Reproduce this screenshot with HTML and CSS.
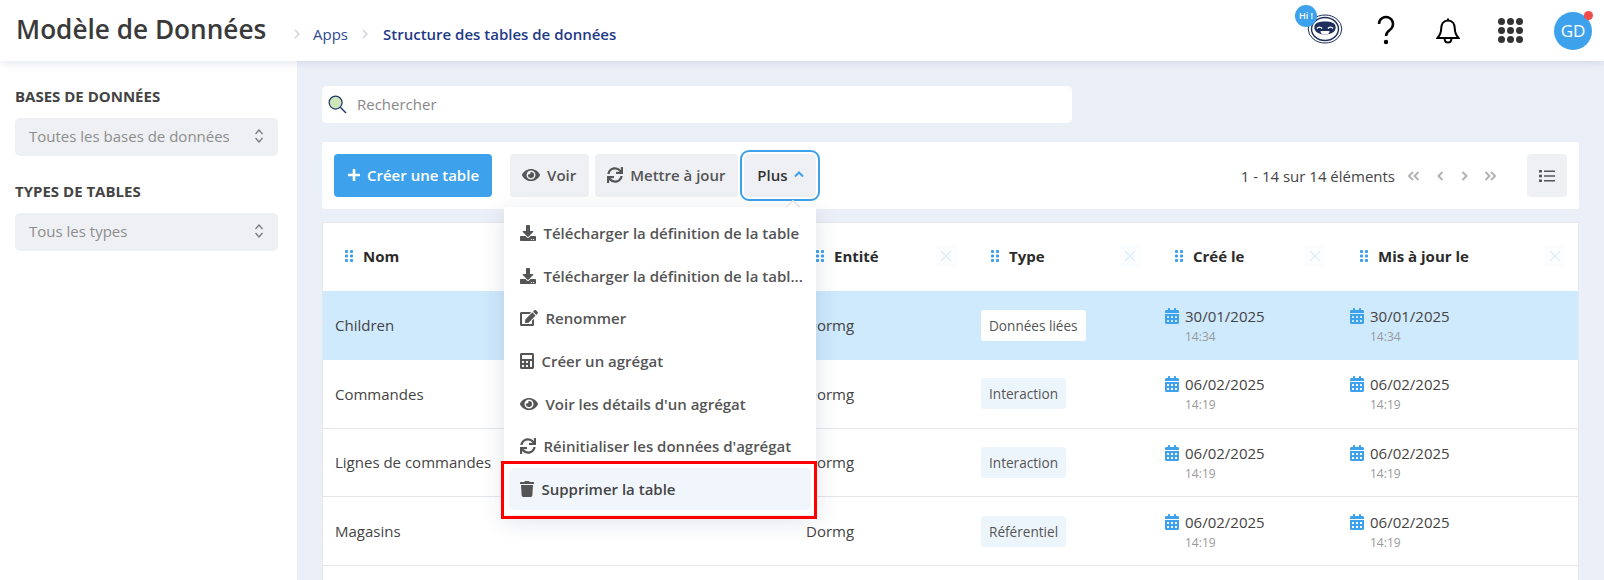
FILE: index.html
```html
<!DOCTYPE html>
<html lang="fr">
<head>
    <meta charset="UTF-8">
    <title>Modèle de Données</title>
    <link rel="stylesheet" href="styles.css">
</head>
<body>
    <svg class="sprites" xmlns="http://www.w3.org/2000/svg">
        <symbol id="i-eye" viewBox="0 0 576 512"><path d="M572.52 241.4C518.29 135.59 410.93 64 288 64S57.68 135.64 3.48 241.41a32.35 32.35 0 0 0 0 29.19C57.71 376.41 165.07 448 288 448s230.32-71.64 284.52-177.41a32.35 32.35 0 0 0 0-29.19zM288 400a144 144 0 1 1 144-144 143.93 143.93 0 0 1-144 144zm0-240a95.31 95.31 0 0 0-25.31 3.79 47.85 47.85 0 0 1-66.9 66.9A95.78 95.78 0 1 0 288 160z"/></symbol>
        <symbol id="i-sync" viewBox="0 0 512 512"><path d="M440.65 12.57l4 82.77A247.16 247.16 0 0 0 255.83 8C134.73 8 33.91 94.92 12.29 209.82A12 12 0 0 0 24.09 224h49.05a12 12 0 0 0 11.67-9.26 175.91 175.91 0 0 1 317-56.94l-101.46-4.86a12 12 0 0 0-12.57 12v47.41a12 12 0 0 0 12 12H500a12 12 0 0 0 12-12V12a12 12 0 0 0-12-12h-47.37a12 12 0 0 0-11.98 12.57zM255.83 432a175.61 175.61 0 0 1-146-77.8l101.8 4.87a12 12 0 0 0 12.57-12v-47.4a12 12 0 0 0-12-12H12a12 12 0 0 0-12 12V500a12 12 0 0 0 12 12h47.35a12 12 0 0 0 12-12.6l-4.15-82.57A247.17 247.17 0 0 0 255.83 504c121.11 0 221.93-86.92 243.55-201.82a12 12 0 0 0-11.8-14.18h-49.05a12 12 0 0 0-11.67 9.26A175.86 175.86 0 0 1 255.83 432z"/></symbol>
        <symbol id="i-download" viewBox="0 0 512 512"><path d="M216 0h80c13.3 0 24 10.7 24 24v168h87.7c17.8 0 26.7 21.5 14.1 34.1L269.7 378.3c-7.5 7.5-19.8 7.5-27.3 0L90.1 226.1c-12.6-12.6-3.7-34.1 14.1-34.1H192V24c0-13.3 10.7-24 24-24zm296 376v112c0 13.3-10.7 24-24 24H24c-13.3 0-24-10.7-24-24V376c0-13.3 10.7-24 24-24h146.7l49 49c20.1 20.1 52.5 20.1 72.6 0l49-49H488c13.3 0 24 10.7 24 24zm-124 88c0-11-9-20-20-20s-20 9-20 20 9 20 20 20 20-9 20-20zm64 0c0-11-9-20-20-20s-20 9-20 20 9 20 20 20 20-9 20-20z"/></symbol>
        <symbol id="i-edit" viewBox="0 0 576 512"><path d="M402.6 83.2l90.2 90.2c3.8 3.8 3.8 10 0 13.8L274.4 405.6l-92.8 10.3c-12.4 1.4-22.9-9.1-21.5-21.5l10.3-92.8L388.8 83.2c3.8-3.8 10-3.8 13.8 0zm162-22.9l-48.8-48.8c-15.2-15.2-39.9-15.2-55.2 0l-35.4 35.4c-3.8 3.8-3.8 10 0 13.8l90.2 90.2c3.8 3.8 10 3.8 13.8 0l35.4-35.4c15.2-15.3 15.2-40 0-55.2zM384 346.2V448H64V128h229.8c3.2 0 6.2-1.3 8.5-3.5l40-40c7.6-7.6 2.2-20.5-8.5-20.5H48C21.5 64 0 85.5 0 112v352c0 26.5 21.5 48 48 48h352c26.5 0 48-21.5 48-48V306.2c0-10.7-12.9-16-20.5-8.5l-40 40c-2.2 2.3-3.5 5.3-3.5 8.5z"/></symbol>
        <symbol id="i-calc" viewBox="0 0 448 512"><path d="M400 0H48C22.4 0 0 22.4 0 48v416c0 25.6 22.4 48 48 48h352c25.6 0 48-22.4 48-48V48c0-25.6-22.4-48-48-48zM128 435.2c0 6.4-6.4 12.8-12.8 12.8H76.8c-6.4 0-12.8-6.4-12.8-12.8v-38.4c0-6.4 6.4-12.8 12.8-12.8h38.4c6.4 0 12.8 6.4 12.8 12.8v38.4zm0-128c0 6.4-6.4 12.8-12.8 12.8H76.8c-6.4 0-12.8-6.4-12.8-12.8v-38.4c0-6.4 6.4-12.8 12.8-12.8h38.4c6.4 0 12.8 6.4 12.8 12.8v38.4zm128 128c0 6.4-6.4 12.8-12.8 12.8h-38.4c-6.4 0-12.8-6.4-12.8-12.8v-38.4c0-6.4 6.4-12.8 12.8-12.8h38.4c6.4 0 12.8 6.4 12.8 12.8v38.4zm0-128c0 6.4-6.4 12.8-12.8 12.8h-38.4c-6.4 0-12.8-6.4-12.8-12.8v-38.4c0-6.4 6.4-12.8 12.8-12.8h38.4c6.4 0 12.8 6.4 12.8 12.8v38.4zm128 128c0 6.4-6.4 12.8-12.8 12.8h-38.4c-6.4 0-12.8-6.4-12.8-12.8V268.8c0-6.4 6.4-12.8 12.8-12.8h38.4c6.4 0 12.8 6.4 12.8 12.8v166.4zm0-256c0 6.4-6.4 12.8-12.8 12.8H76.8c-6.4 0-12.8-6.4-12.8-12.8V76.8C64 70.4 70.4 64 76.8 64h294.4c6.4 0 12.8 6.4 12.8 12.8v102.4z"/></symbol>
        <symbol id="i-trash" viewBox="0 0 448 512"><path d="M432 32H312l-9.4-18.7A24 24 0 0 0 281.1 0H166.8a23.72 23.72 0 0 0-21.4 13.3L136 32H16A16 16 0 0 0 0 48v32a16 16 0 0 0 16 16h416a16 16 0 0 0 16-16V48a16 16 0 0 0-16-16zM53.2 467a48 48 0 0 0 47.9 45h245.8a48 48 0 0 0 47.9-45L416 128H32z"/></symbol>
        <symbol id="i-calendar" viewBox="0 0 448 512"><path d="M0 464c0 26.5 21.5 48 48 48h352c26.5 0 48-21.5 48-48V192H0v272zm320-196c0-6.6 5.4-12 12-12h40c6.6 0 12 5.4 12 12v40c0 6.6-5.4 12-12 12h-40c-6.6 0-12-5.4-12-12v-40zm0 128c0-6.6 5.4-12 12-12h40c6.6 0 12 5.4 12 12v40c0 6.6-5.4 12-12 12h-40c-6.6 0-12-5.4-12-12v-40zM192 268c0-6.6 5.4-12 12-12h40c6.6 0 12 5.4 12 12v40c0 6.6-5.4 12-12 12h-40c-6.6 0-12-5.4-12-12v-40zm0 128c0-6.6 5.4-12 12-12h40c6.6 0 12 5.4 12 12v40c0 6.6-5.4 12-12 12h-40c-6.6 0-12-5.4-12-12v-40zM64 268c0-6.6 5.4-12 12-12h40c6.6 0 12 5.4 12 12v40c0 6.6-5.4 12-12 12H76c-6.6 0-12-5.4-12-12v-40zm0 128c0-6.6 5.4-12 12-12h40c6.6 0 12 5.4 12 12v40c0 6.6-5.4 12-12 12H76c-6.6 0-12-5.4-12-12v-40zM400 64h-48V16c0-8.8-7.2-16-16-16h-32c-8.8 0-16 7.2-16 16v48H160V16c0-8.8-7.2-16-16-16h-32c-8.8 0-16 7.2-16 16v48H48C21.5 64 0 85.5 0 112v48h448v-48c0-26.5-21.5-48-48-48z"/></symbol>
        <symbol id="i-drag" viewBox="0 0 8 12"><g><rect x="0" y="0" width="3" height="3" rx=".8"/><rect x="5" y="0" width="3" height="3" rx=".8"/><rect x="0" y="4.5" width="3" height="3" rx=".8"/><rect x="5" y="4.5" width="3" height="3" rx=".8"/><rect x="0" y="9" width="3" height="3" rx=".8"/><rect x="5" y="9" width="3" height="3" rx=".8"/></g></symbol>
        <symbol id="i-close" viewBox="0 0 22 22"><path d="M6 6l10 10M16 6L6 16" fill="none" stroke="currentColor" stroke-width="1.2"/></symbol>
    </svg>

    <header class="topbar">
        <h1 class="page-title">Modèle de Données</h1>
        <nav class="crumbs">
            <svg class="crumb-sep" viewBox="0 0 6 10"><path d="M1 1l4 4-4 4" fill="none" stroke="currentColor" stroke-width="1.2"/></svg>
            <a class="crumb">Apps</a>
            <svg class="crumb-sep" viewBox="0 0 6 10"><path d="M1 1l4 4-4 4" fill="none" stroke="currentColor" stroke-width="1.2"/></svg>
            <a class="crumb crumb-current">Structure des tables de données</a>
        </nav>
        <div class="top-actions">
            <div class="bot">
                <svg class="bot-face" viewBox="0 0 36 30">
                    <ellipse cx="18" cy="15" rx="16.8" ry="14" fill="#fff" stroke="#1e2f5c" stroke-width="1"/>
                    <ellipse cx="18" cy="15" rx="13.5" ry="11.500" fill="#fff" stroke="#1e2f5c" stroke-width="1.400"/>
                    <path d="M7.500 12c1-3.500 5-4.500 10.500-4.500s9.500 1 10.500 4.500c.8 3.500-1 8-10.500 8.500-9.500-.5-11.300-5-10.500-8.500z" fill="#1e2f5c"/>
                    <path d="M10 14.500a3 3 0 0 1 5 0M21 14.500a3 3 0 0 1 5 0" fill="none" stroke="#fff" stroke-width="1.400"/>
                    <path d="M13.500 17h9a4.500 3.500 0 0 1-9 0z" fill="#fff"/>
                </svg>
                <span class="bot-hi">Hi !</span>
            </div>
            <svg class="help-icon" viewBox="0 0 18 30"><path d="M2 9a7 7 0 1 1 11 5.700c-2.500 1.800-4 3-4 6.300" fill="none" stroke="#000" stroke-width="2.500"/><circle cx="9" cy="27" r="2.200" fill="#000"/></svg>
            <svg class="bell-icon" viewBox="0 0 24 28"><path d="M12 3.500c-4.500 0-6.800 3.500-6.800 8 0 5-1.500 7-3.700 9.500h21c-2.200-2.500-3.700-4.500-3.700-9.500 0-4.500-2.300-8-6.800-8zM12 3.500V1.500M8.500 21c0 6 7 6 7 0" fill="none" stroke="#000" stroke-width="2"/></svg>
            <div class="apps-grid">
                <i></i><i></i><i></i><i></i><i></i><i></i><i></i><i></i><i></i>
            </div>
            <div class="avatar">GD<span class="avatar-dot"></span></div>
        </div>
    </header>

    <div class="layout">
        <aside class="sidebar">
            <h3 class="side-title">BASES DE DONNÉES</h3>
            <div class="side-select">
                <span>Toutes les bases de données</span>
                <svg class="updown" viewBox="0 0 10 16"><path d="M1.500 6l3.500-4 3.500 4M1.500 10l3.500 4 3.500-4" fill="none" stroke="currentColor" stroke-width="1.200"/></svg>
            </div>
            <h3 class="side-title">TYPES DE TABLES</h3>
            <div class="side-select">
                <span>Tous les types</span>
                <svg class="updown" viewBox="0 0 10 16"><path d="M1.500 6l3.500-4 3.500 4M1.500 10l3.500 4 3.500-4" fill="none" stroke="currentColor" stroke-width="1.200"/></svg>
            </div>
        </aside>

        <main class="content">
            <div class="search">
                <svg class="search-icon" viewBox="0 0 20 20"><circle cx="8" cy="8" r="6.800" fill="#cfe6b8" stroke="#1e3a6e" stroke-width="1.300"/><path d="M13 13l6 6" stroke="#1e3a6e" stroke-width="1.500"/></svg>
                <span class="search-ph">Rechercher</span>
            </div>

            <div class="toolbar">
                <button class="btn btn-primary"><svg class="plus-icon" viewBox="0 0 14 14"><path d="M7 1v12M1 7h12" stroke="#fff" stroke-width="2.600"/></svg>Créer une table</button>
                <button class="btn btn-first"><svg class="ico"><use href="#i-eye"/></svg>Voir</button>
                <button class="btn"><svg class="ico ico-sq"><use href="#i-sync"/></svg>Mettre à jour</button>
                <div class="more">
                    <button class="btn btn-open">Plus<svg class="chev-up" viewBox="0 0 10 7"><path d="M1 5.500l4-4 4 4" fill="none" stroke="currentColor" stroke-width="2"/></svg></button>
                    <div class="menu">
                        <a class="menu-item"><svg class="ico ico-sq"><use href="#i-download"/></svg><span>Télécharger la définition de la table</span></a>
                        <a class="menu-item"><svg class="ico ico-sq"><use href="#i-download"/></svg><span>Télécharger la définition de la tabl...</span></a>
                        <a class="menu-item"><svg class="ico"><use href="#i-edit"/></svg><span>Renommer</span></a>
                        <a class="menu-item"><svg class="ico ico-nar"><use href="#i-calc"/></svg><span>Créer un agrégat</span></a>
                        <a class="menu-item"><svg class="ico"><use href="#i-eye"/></svg><span>Voir les détails d'un agrégat</span></a>
                        <a class="menu-item"><svg class="ico ico-sq"><use href="#i-sync"/></svg><span>Réinitialiser les données d'agrégat</span></a>
                        <a class="menu-item menu-item-hover"><svg class="ico ico-nar"><use href="#i-trash"/></svg><span>Supprimer la table</span></a>
                        <div class="red-mark"></div>
                    </div>
                </div>
                <div class="pager">
                    <span class="pager-text">1 - 14 sur 14 éléments</span>
                    <svg class="pg pg-d" viewBox="0 0 13 10"><path d="M6 1L2 5l4 4M11.500 1l-4 4 4 4" fill="none" stroke="currentColor" stroke-width="2"/></svg>
                    <svg class="pg pg-s" viewBox="0 0 7 10"><path d="M5.500 1l-4 4 4 4" fill="none" stroke="currentColor" stroke-width="2"/></svg>
                    <svg class="pg pg-s" viewBox="0 0 7 10"><path d="M1.500 1l4 4-4 4" fill="none" stroke="currentColor" stroke-width="2"/></svg>
                    <svg class="pg pg-d" viewBox="0 0 13 10"><path d="M1.500 1l4 4-4 4M7 1l4 4-4 4" fill="none" stroke="currentColor" stroke-width="2"/></svg>
                </div>
                <button class="btn btn-list"><svg class="list-icon" viewBox="0 0 16 12"><path d="M0 0h3v2.400H0zM0 4.800h3v2.400H0zM0 9.600h3V12H0zM5 .4h11v1.600H5zM5 5.200h11v1.600H5zM5 10h11v1.600H5z"/></svg></button>
            </div>

            <div class="grid-table">
                <div class="row row-head">
                    <div class="th"><svg class="drag"><use href="#i-drag"/></svg>Nom</div>
                    <div class="th"><svg class="drag"><use href="#i-drag"/></svg>Entité<svg class="th-close"><use href="#i-close"/></svg></div>
                    <div class="th"><svg class="drag"><use href="#i-drag"/></svg>Type<svg class="th-close"><use href="#i-close"/></svg></div>
                    <div class="th"><svg class="drag"><use href="#i-drag"/></svg>Créé le<svg class="th-close"><use href="#i-close"/></svg></div>
                    <div class="th"><svg class="drag"><use href="#i-drag"/></svg>Mis à jour le<svg class="th-close"><use href="#i-close"/></svg></div>
                </div>

                <div class="row row-active">
                    <div class="td">Children</div>
                    <div class="td">Dormg</div>
                    <div class="td"><span class="tag">Données liées</span></div>
                    <div class="td"><div class="when"><svg class="cal"><use href="#i-calendar"/></svg>30/01/2025<small>14:34</small></div></div>
                    <div class="td"><div class="when"><svg class="cal"><use href="#i-calendar"/></svg>30/01/2025<small>14:34</small></div></div>
                </div>
                <div class="row">
                    <div class="td">Commandes</div>
                    <div class="td">Dormg</div>
                    <div class="td"><span class="tag">Interaction</span></div>
                    <div class="td"><div class="when"><svg class="cal"><use href="#i-calendar"/></svg>06/02/2025<small>14:19</small></div></div>
                    <div class="td"><div class="when"><svg class="cal"><use href="#i-calendar"/></svg>06/02/2025<small>14:19</small></div></div>
                </div>
                <div class="row">
                    <div class="td">Lignes de commandes</div>
                    <div class="td">Dormg</div>
                    <div class="td"><span class="tag">Interaction</span></div>
                    <div class="td"><div class="when"><svg class="cal"><use href="#i-calendar"/></svg>06/02/2025<small>14:19</small></div></div>
                    <div class="td"><div class="when"><svg class="cal"><use href="#i-calendar"/></svg>06/02/2025<small>14:19</small></div></div>
                </div>
                <div class="row">
                    <div class="td">Magasins</div>
                    <div class="td">Dormg</div>
                    <div class="td"><span class="tag">Référentiel</span></div>
                    <div class="td"><div class="when"><svg class="cal"><use href="#i-calendar"/></svg>06/02/2025<small>14:19</small></div></div>
                    <div class="td"><div class="when"><svg class="cal"><use href="#i-calendar"/></svg>06/02/2025<small>14:19</small></div></div>
                </div>
                <div class="row"></div>
            </div>
        </main>
    </div>
</body>
</html>
```

FILE: styles.css
```css
/* base */
html, body {
    height: 100%;
}

body {
    margin: 0;
    overflow: hidden;
    background: #ebf0f8;
    font-family: "Open Sans", sans-serif;
    font-size: 15px;
    color: #333;
}

.sprites {
    display: none;
}

/* top bar */
.topbar {
    position: relative;
    z-index: 5;
    display: flex;
    align-items: center;
    height: 61px;
    padding: 0 12px 0 16px;
    background: #fff;
    box-shadow: 0 2px 8px rgba(30, 50, 90, 0.12);
}

.page-title {
    width: 252px;
    margin: 0 0 3px;
    font-size: 26.2px;
    font-weight: 600;
    white-space: nowrap;
    color: #3a3a3a;
}

.crumbs {
    display: flex;
    align-items: center;
    margin-left: 26px;
    margin-top: 6px;
}

.crumb {
    font-size: 15px;
    color: #2f4a8f;
}

.crumb-current {
    font-weight: 600;
    color: #1f3a86;
}

.crumb-sep {
    width: 6px;
    height: 10px;
    margin-right: 13px;
    color: #c9ced6;
}

.crumb + .crumb-sep {
    margin-left: 14px;
    margin-right: 15px;
}

.top-actions {
    display: flex;
    align-items: center;
    margin-left: auto;
}

.bot {
    position: relative;
    width: 36px;
    height: 30px;
    margin-right: 34px;
    margin-bottom: 4px;
}

.bot-face {
    display: block;
    width: 36px;
    height: 30px;
}

.bot-hi {
    position: absolute;
    left: -12px;
    top: -9px;
    width: 22px;
    height: 22px;
    border-radius: 50%;
    background: #3ea1ec;
    color: #fff;
    font-size: 9px;
    font-weight: 600;
    line-height: 22px;
    text-align: center;
}

.help-icon {
    width: 18px;
    height: 30px;
    margin-right: 41px;
    margin-bottom: 2px;
}

.bell-icon {
    width: 24px;
    height: 28px;
    margin-right: 38px;
}

.apps-grid {
    display: grid;
    grid-template-columns: repeat(3, 7px);
    gap: 2px;
    margin-right: 31px;
}

.apps-grid i {
    width: 7px;
    height: 7px;
    border-radius: 50%;
    background: #333;
}

.avatar {
    position: relative;
    width: 38px;
    height: 38px;
    border-radius: 50%;
    background: #3ea1ec;
    color: #fff;
    font-size: 17px;
    line-height: 38px;
    text-align: center;
}

.avatar-dot {
    position: absolute;
    top: -1px;
    right: -1px;
    width: 9px;
    height: 9px;
    border-radius: 50%;
    background: #f44a4a;
}

/* page */
.layout {
    display: flex;
    height: calc(100% - 61px);
}

.sidebar {
    flex: 0 0 297px;
    box-sizing: border-box;
    padding: 25px 19px 0 15px;
    background: #fff;
}

.side-title {
    margin: 0 0 11px;
    font-size: 15px;
    line-height: 21px;
    font-weight: 700;
    color: #444;
}

.side-select {
    display: flex;
    align-items: center;
    justify-content: space-between;
    box-sizing: border-box;
    height: 38px;
    margin-bottom: 25px;
    padding: 0 14px 2px;
    border-radius: 5px;
    background: #eef0f4;
    color: #8d8d8d;
    font-size: 15px;
}

.updown {
    width: 10px;
    height: 16px;
    color: #777;
}

.content {
    flex: 1;
    min-width: 0;
    padding: 25px 25px 0;
}

.search {
    display: flex;
    align-items: center;
    width: 750px;
    height: 37px;
    border-radius: 5px;
    background: #fff;
    margin-bottom: 19px;
}

.search-icon {
    width: 19px;
    height: 19px;
    margin: 0 10px 0 6px;
}

.search-ph {
    margin-bottom: 2px;
    font-size: 15px;
    color: #888;
}

/* toolbar */
.toolbar {
    display: flex;
    align-items: center;
    height: 67px;
    box-sizing: border-box;
    padding: 0 12px;
    border-radius: 3px;
    background: #fff;
    margin-bottom: 13px;
}

.btn {
    display: flex;
    align-items: center;
    gap: 7px;
    height: 43px;
    margin-left: 6px;
    padding: 0 13px 2px 12px;
    border: 0;
    border-radius: 4px;
    background: #eef0f4;
    color: #555;
    font-family: inherit;
    font-size: 15px;
    font-weight: 600;
}

.btn-primary {
    margin-left: 0;
    gap: 6px;
    padding: 0 13px 2px;
    background: #3ea1ec;
    color: #fff;
}

.btn-first {
    margin-left: 18px;
}

.plus-icon {
    width: 14px;
    height: 14px;
}

.ico {
    flex: none;
    width: 18px;
    height: 16px;
    fill: #555;
}

.ico-sq {
    width: 16px;
}

.ico-nar {
    width: 14px;
}

.more {
    position: relative;
    margin-left: 6px;
}

.btn-open {
    margin-left: 0;
    width: 72px;
    padding: 0 0 2px;
    justify-content: center;
    gap: 6px;
    color: #333;
    outline: 2px solid #3ea1ec;
    outline-offset: 2px;
    border-radius: 5px;
}

.chev-up {
    width: 10px;
    height: 7px;
    color: #3ea1ec;
}

.menu {
    position: absolute;
    z-index: 10;
    top: 53px;
    left: -240px;
    width: 312px;
    box-sizing: border-box;
    padding: 5px;
    border-radius: 4px;
    background: #fff;
    box-shadow: 0 6px 24px rgba(30, 50, 90, 0.14);
}

.menu::before {
    content: "";
    position: absolute;
    top: -5px;
    left: 284px;
    width: 9px;
    height: 9px;
    background: #fff;
    border-top: 1px solid #d8dce2;
    border-left: 1px solid #d8dce2;
    transform: rotate(45deg);
}

.menu-item {
    display: flex;
    align-items: center;
    gap: 7px;
    height: 42.6px;
    padding: 0 8px 0 11px;
    border-radius: 5px;
    color: #555;
    font-size: 15px;
    font-weight: 600;
    white-space: nowrap;
}

.menu-item-hover {
    background: #f1f6fd;
    color: #444;
}

/* annotation drawn over the screenshot */
.red-mark {
    position: absolute;
    left: -3px;
    top: 254px;
    width: 316px;
    height: 58px;
    box-sizing: border-box;
    border: 3px solid #f00;
}

.pager {
    display: flex;
    align-items: center;
    margin-left: auto;
}

.pager-text {
    margin-right: 12px;
    font-size: 15px;
    color: #444;
}

.pg {
    height: 10px;
    color: #b3b3b3;
}

.pg-d {
    width: 13px;
}

.pg-s {
    width: 7px;
    margin-left: 17px;
    margin-right: 0;
}

.pg-s + .pg-d {
    margin-left: 16px;
}

.btn-list {
    justify-content: center;
    width: 40px;
    margin-left: 30px;
    padding: 0;
}

.list-icon {
    width: 16px;
    height: 12px;
    fill: #555;
}

/* table */
.grid-table {
    border: 1px solid #e6e8ec;
    border-bottom: 0;
    background: #fff;
}

.row {
    display: grid;
    grid-template-columns: 471px 175px 184px 185px 1fr;
    box-sizing: border-box;
    height: 68.75px;
    border-bottom: 1px solid #e4e6ea;
    font-size: 15px;
    color: #444;
}

.row-head {
    height: 68px;
    border-bottom: 0;
}

.row-active {
    background: #cfe9fd;
    border-bottom: 0;
}

.th {
    display: flex;
    align-items: center;
    padding: 0 12px 2px 22px;
    font-size: 15px;
    font-weight: 700;
    color: #2b2b2b;
}

.drag {
    flex: none;
    width: 8px;
    height: 12px;
    margin-right: 10px;
    fill: #3ea1ec;
}

.th-close {
    width: 22px;
    height: 22px;
    margin-left: auto;
    border-radius: 3px;
    background: #fbfdfe;
    color: #dbeefb;
}

.td {
    display: flex;
    align-items: center;
    padding: 0 12px;
}

.tag {
    padding: 0 8px;
    border-radius: 3px;
    background: #edf5fc;
    font-size: 13.6px;
    line-height: 31px;
    color: #555;
}

.row-active .tag {
    background: #fff;
}

.when {
    position: relative;
    padding-top: 2px;
    padding-left: 20px;
    font-size: 15px;
    line-height: 20px;
    color: #444;
}

.when small {
    display: block;
    margin-top: 1px;
    font-size: 12px;
    color: #999;
}

.cal {
    position: absolute;
    left: 0;
    top: 4px;
    width: 14px;
    height: 16px;
    fill: #3ea1ec;
}
```
